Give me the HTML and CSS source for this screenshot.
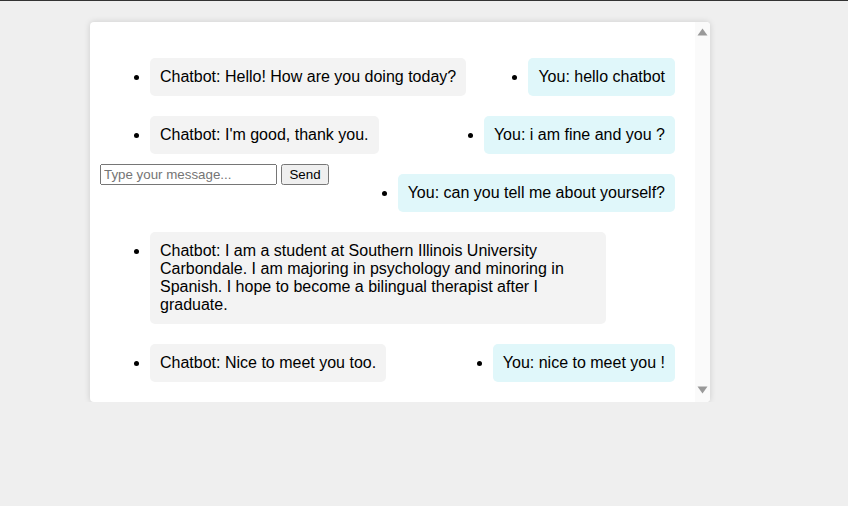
FILE: index.html
```html
<!DOCTYPE html>
<html lang="en">
<head>
<meta charset="utf-8">
<title>Chatbot</title>
<link rel="stylesheet" href="styles.css">
</head>
<body>
<div class="topbar"></div>
<div class="chat">
  <div class="pane">
    <ul class="messages">
      <li class="msg bot">Chatbot: Hello! How are you doing today?</li>
      <li class="msg user">You: hello chatbot</li>
      <li class="msg bot">Chatbot: I'm good, thank you.</li>
      <li class="msg user">You: i am fine and you ?</li>
      <li class="msg user">You: can you tell me about yourself?</li>
      <li class="msg bot">Chatbot: I am a student at Southern Illinois University Carbondale. I am majoring in psychology and minoring in Spanish. I hope to become a bilingual therapist after I graduate.</li>
      <li class="msg bot">Chatbot: Nice to meet you too.</li>
      <li class="msg user">You: nice to meet you !</li>
    </ul>
    <form class="composer">
      <input class="field" type="text" placeholder="Type your message..."> <button class="send" type="button">Send</button>
    </form>
  </div>
  <div class="scrollbar" aria-hidden="true">
    <svg class="arrow" width="15" height="24" viewBox="0 0 15 24"><polygon points="7.5,6.5 12.5,13.5 2.5,13.5" fill="#999"/></svg>
    <svg class="arrow" width="15" height="24" viewBox="0 0 15 24"><polygon points="2.5,8.5 12.5,8.5 7.5,15.5" fill="#999"/></svg>
  </div>
</div>
</body>
</html>
```
FILE: styles.css
```css
html, body {
  margin: 0;
  padding: 0;
}
body {
  background: #efefef;
  font-family: "Liberation Sans", Arial, sans-serif;
  font-size: 16px;
  color: #000;
}
.topbar {
  height: 1px;
  background: #333;
}
.chat {
  display: flex;
  width: 620px;
  height: 380px;
  margin: 21px 0 0 90px;
  background: #fff;
  border-radius: 4px;
  box-shadow: 0 0 6px rgba(0, 0, 0, 0.15);
  overflow: hidden;
}
.pane {
  flex: 1;
  padding: 10px;
  display: flow-root;
  overflow: hidden;
}
.scrollbar {
  width: 15px;
  flex: none;
  background: #fafafa;
  display: flex;
  flex-direction: column;
  justify-content: space-between;
}
.arrow {
  display: block;
}
.messages {
  margin: 16px 0;
  padding-left: 40px;
}
.msg {
  margin: 10px;
  padding: 10px;
  border-radius: 5px;
  max-width: 436px;
}
.msg.bot {
  float: left;
  clear: left;
  background: #f3f3f3;
}
.msg.user {
  float: right;
  clear: right;
  background: #e0f7fa;
}
.composer {
  margin: 0;
}
.field, .send {
  font-family: "Liberation Sans", Arial, sans-serif;
  font-size: 13.333px;
}
.field {
  box-sizing: border-box;
  width: 177px;
}
```
